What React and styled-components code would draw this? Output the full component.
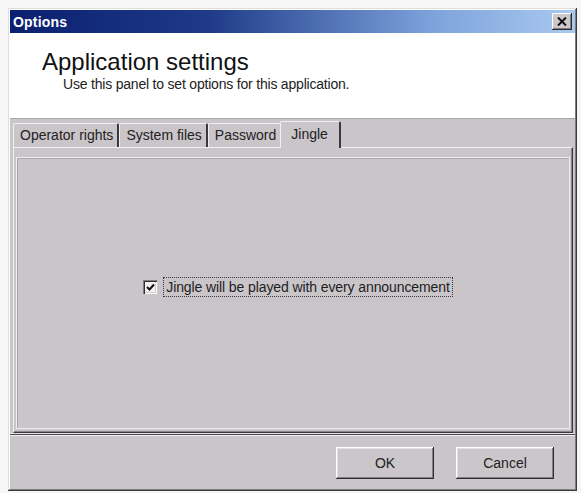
import React from "react";
import styled, { createGlobalStyle } from "styled-components";

const Global = createGlobalStyle`
  html, body { margin: 0; padding: 0; background: #f6f6f6; }
  body { font-family: "Liberation Sans", Arial, sans-serif; }
`;

const Window = styled.div`
  margin: 8px 0 0 8px;
  width: 569px;
  height: 483px;
  box-sizing: border-box;
  padding: 2px;
  background: #c9c5c9;
  box-shadow: inset -1px -1px #3c3c3c, inset 1px 1px #dedede,
    inset -2px -2px #7e7b80, inset 2px 2px #ffffff;
  display: flex;
  flex-direction: column;
`;

const TitleBar = styled.div`
  height: 23px;
  flex: none;
  display: flex;
  align-items: center;
  justify-content: space-between;
  padding: 0 3px 0 3px;
  background: linear-gradient(90deg, #0a1f70 0%, #1e3a88 35%, #7ea3dc 75%, #a9c9ef 100%);
  color: #fff;
  font-weight: bold;
  font-size: 14px;
  letter-spacing: 0.2px;
`;

const CloseBtn = styled.div`
  width: 20px;
  height: 17px;
  box-sizing: border-box;
  background: #ccc8cc;
  box-shadow: inset -1px -1px #2e2e2e, inset 1px 1px #ffffff, inset -2px -2px #807d82;
  display: flex;
  align-items: center;
  justify-content: center;
`;

const Header = styled.div`
  height: 86px;
  flex: none;
  background: #ffffff;
  border-bottom: 1px solid #a8a5aa;
  box-sizing: border-box;
  padding: 15px 0 0 32px;
`;

const Heading = styled.div`
  font-size: 24px;
  color: #111;
  line-height: 28px;
`;

const SubHeading = styled.div`
  font-size: 14px;
  color: #222;
  margin: 0 0 0 21px;
  letter-spacing: -0.2px;
`;

const TabArea = styled.div`
  padding: 2px 2px 0 3px;
  display: flex;
  flex-direction: column;
`;

const TabRow = styled.div`
  display: flex;
  align-items: flex-end;
  height: 26px;
`;

const Tab = styled.div`
  height: ${(p) => (p.$active ? "27px" : "24px")};
  box-sizing: border-box;
  padding: ${(p) => (p.$active ? "0 11px 3px 10px" : "0 4px 1px 6px")};
  margin-left: ${(p) => (p.$active ? "-2px" : "0")};
  margin-bottom: ${(p) => (p.$active ? "-1px" : "0")};
  display: flex;
  align-items: center;
  font-size: 14px;
  color: #222;
  background: #c9c5c9;
  border-top: 1px solid #f0eef0;
  border-left: 1px solid #f0eef0;
  border-right: 2px solid #3a383c;
  border-top-left-radius: 2px;
  border-top-right-radius: 2px;
  position: relative;
  z-index: ${(p) => (p.$active ? 2 : 1)};
`;

const Page = styled.div`
  height: 286px;
  box-sizing: border-box;
  border-top: 1px solid #f2f0f2;
  border-left: 1px solid #f2f0f2;
  border-right: 1px solid #3a383c;
  border-bottom: 1px solid #3a383c;
  box-shadow: inset -1px -1px #8a878c;
  padding: 9px 2px 3px 2px;
  display: flex;
`;

const InnerPanel = styled.div`
  flex: 1;
  border: 1px solid #efedef;
  box-shadow: inset 1px 1px #a9a6ab;
  display: flex;
  justify-content: center;
  padding: 119px 0 0 10px;
`;

const CheckRow = styled.div`
  display: flex;
  align-items: center;
  height: 20px;
`;

const CheckBox = styled.div`
  width: 14px;
  height: 14px;
  box-sizing: border-box;
  background: #f2f0f2;
  box-shadow: inset 1px 1px #7e7b80, inset 2px 2px #2e2e2e, inset -1px -1px #ffffff, inset -2px -2px #cfcccf;
  display: flex;
  align-items: center;
  justify-content: center;
  margin-right: 6px;
`;

const Label = styled.div`
  font-size: 14px;
  color: #1e1e1e;
  border: 1px dotted #3a383c;
  padding: 1px 2px;
  letter-spacing: -0.1px;
`;

const Separator = styled.div`
  flex: none;
  height: 3px;
  border-top: 1px solid #e6e4e6;
  border-bottom: 1px solid #f2f0f2;
  background: #4a484c;
  box-sizing: border-box;
`;

const Footer = styled.div`
  flex: 1;
  display: flex;
  justify-content: flex-end;
  align-items: flex-start;
  gap: 22px;
  padding: 11px 21px 0 0;
`;

const Button = styled.div`
  width: 98px;
  height: 32px;
  box-sizing: border-box;
  display: flex;
  align-items: center;
  justify-content: center;
  font-size: 14px;
  color: #222;
  background: #cac6ca;
  box-shadow: inset -1px -1px #2e2e2e, inset 1px 1px #ffffff, inset -2px -2px #838085, inset 2px 2px #e2e0e2;
`;

export default function App() {
  return (
    <>
      <Global />
      <Window>
        <TitleBar>
          <span>Options</span>
          <CloseBtn>
            <svg width="10" height="9" viewBox="0 0 10 9">
              <path d="M1 0.5 L9 8.5 M9 0.5 L1 8.5" stroke="#111" strokeWidth="2" />
            </svg>
          </CloseBtn>
        </TitleBar>
        <Header>
          <Heading>Application settings</Heading>
          <SubHeading>Use this panel to set options for this application.</SubHeading>
        </Header>
        <TabArea>
          <TabRow>
            <Tab>Operator rights</Tab>
            <Tab>System files</Tab>
            <Tab>Password</Tab>
            <Tab $active>Jingle</Tab>
          </TabRow>
          <Page>
            <InnerPanel>
              <CheckRow>
                <CheckBox>
                  <svg width="9" height="9" viewBox="0 0 9 9">
                    <path d="M1 4 L3.5 6.5 L8 1.5" stroke="#111" strokeWidth="2" fill="none" />
                  </svg>
                </CheckBox>
                <Label>Jingle will be played with every announcement</Label>
              </CheckRow>
            </InnerPanel>
          </Page>
        </TabArea>
        <Separator />
        <Footer>
          <Button>OK</Button>
          <Button>Cancel</Button>
        </Footer>
      </Window>
    </>
  );
}
